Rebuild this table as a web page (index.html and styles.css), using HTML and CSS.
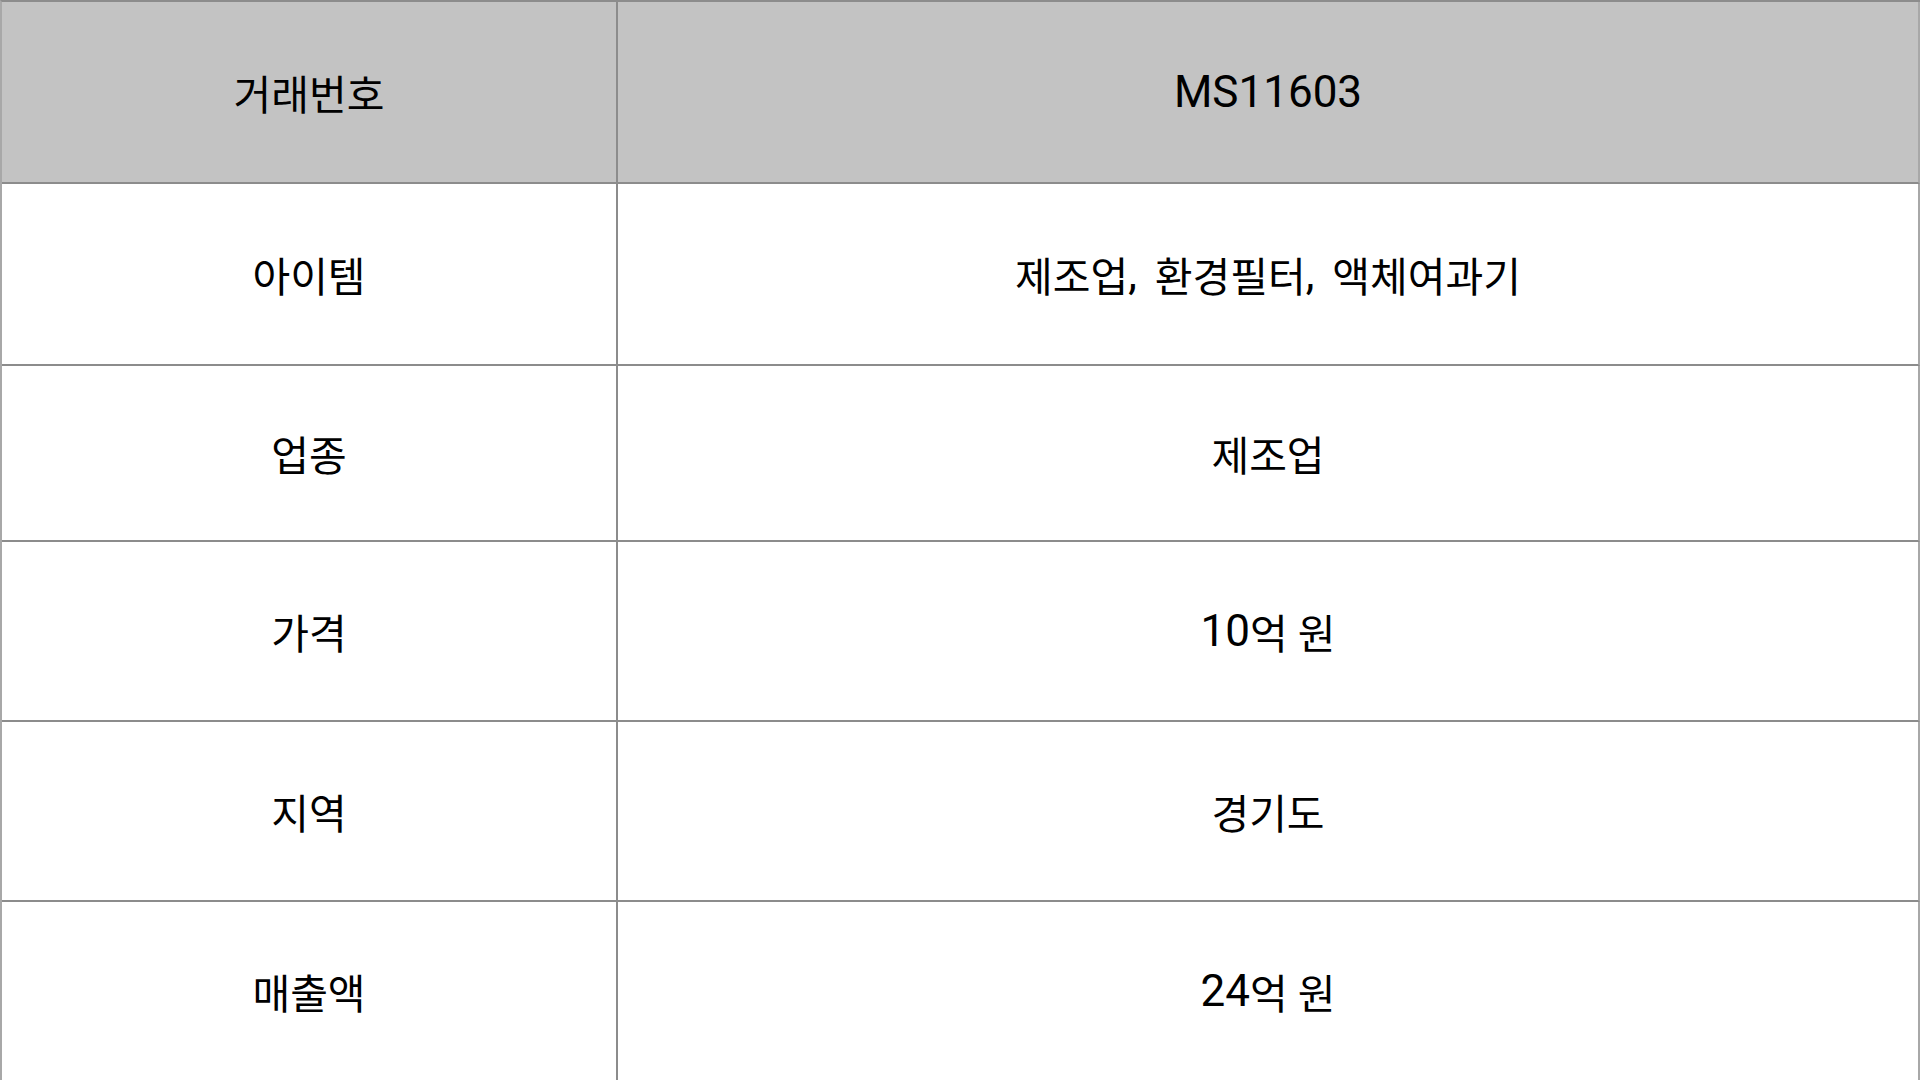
FILE: index.html
```html
<!DOCTYPE html>
<html lang="ko">
<head>
    <meta charset="UTF-8">
    <meta name="viewport" content="width=device-width, initial-scale=1.0">
    <title>거래 정보</title>
    <link rel="stylesheet" href="styles.css">
</head>
<body>
    <div class="deal">
        <div class="cell head"><span class="ko">거래번호</span></div>
        <div class="cell head">MS11603</div>

        <div class="cell"><span class="ko">아이템</span></div>
        <div class="cell list"><span class="ko">제조업</span>, <span class="ko">환경필터</span>, <span class="ko">액체여과기</span></div>

        <div class="cell"><span class="ko">업종</span></div>
        <div class="cell"><span class="ko">제조업</span></div>

        <div class="cell"><span class="ko">가격</span></div>
        <div class="cell">10<span class="ko">억 원</span></div>

        <div class="cell"><span class="ko">지역</span></div>
        <div class="cell"><span class="ko">경기도</span></div>

        <div class="cell"><span class="ko">매출액</span></div>
        <div class="cell">24<span class="ko">억 원</span></div>
    </div>
</body>
</html>
```

FILE: styles.css
```css
body {
    margin: 0;
    font-family: Roboto, "Noto Sans CJK KR", sans-serif;
    background: #fff;
    color: #000;
}
.deal {
    display: grid;
    grid-template-columns: 616px 1fr;
    grid-template-rows: 182px 182px 176px 180px 180px 180px;
    width: 1920px;
    height: 1080px;
    box-sizing: border-box;
    border-top: 2px solid #8c8c8c;
    border-left: 2px solid #a8a8a8;
}
.cell {
    display: flex;
    align-items: center;
    justify-content: center;
    white-space: pre;
    font-size: 44px;
    border-right: 2px solid #8c8c8c;
    border-bottom: 2px solid #8c8c8c;
}
.cell:nth-child(2n) {
    border-right-color: #a8a8a8;
}
.deal .cell:nth-last-child(-n+2) {
    border-bottom-color: #a8a8a8;
}
.head {
    background-color: #c3c3c3;
}
.list {
    word-spacing: 7px;
}
.ko {
    font-size: 41px;
    word-spacing: normal;
}
```
